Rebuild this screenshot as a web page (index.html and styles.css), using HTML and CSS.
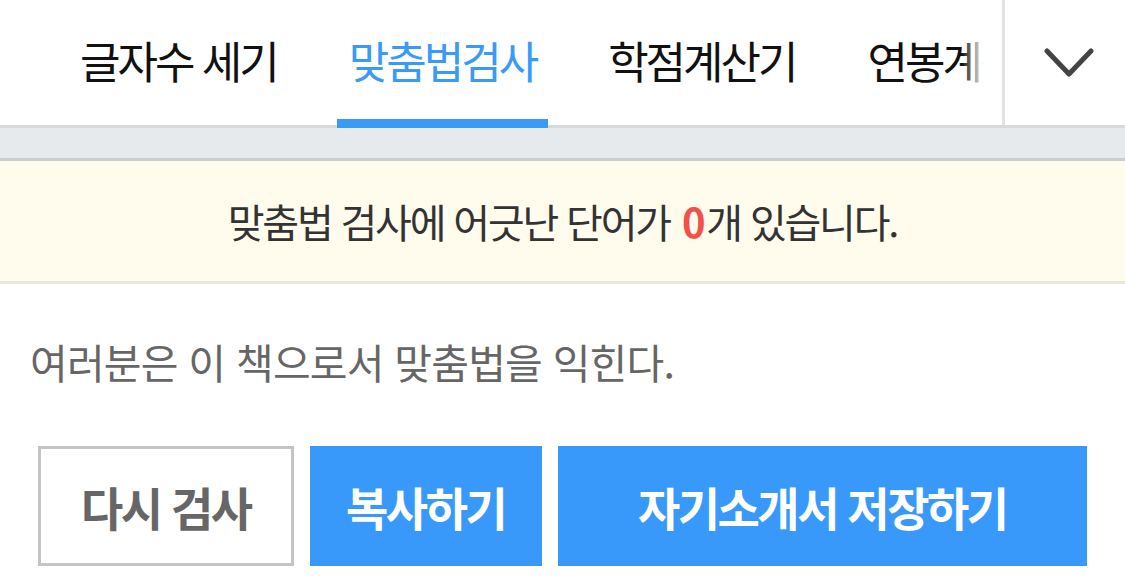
FILE: index.html
```html
<!DOCTYPE html>
<html lang="ko">
<head>
  <meta charset="UTF-8">
  <meta name="viewport" content="width=device-width, initial-scale=1.0">
  <title>맞춤법검사</title>
  <link rel="stylesheet" href="styles.css">
</head>
<body>

  <!-- Top Tabs -->
  <div id="top-nav">
    <div class="tab-list">
      <a class="tab" href="#">글자수 세기</a>
      <a class="tab active" href="#">맞춤법검사</a>
      <a class="tab" href="#">학점계산기</a>
      <a class="tab" href="#">연봉계산기</a>
    </div>
    <button class="more-btn" aria-label="더보기">
      <svg width="50" height="30" viewBox="0 0 50 30">
        <polyline points="3,3 25,26 47,3" fill="none" stroke="#444" stroke-width="5" stroke-linecap="round" stroke-linejoin="round"/>
      </svg>
    </button>
  </div>

  <div class="gap-band"></div>

  <!-- Result -->
  <div class="notice">
    맞춤법 검사에 어긋난 단어가 <strong class="count">0</strong>개 있습니다.
  </div>

  <div class="result-text">여러분은 이 책으로서 맞춤법을 익힌다.</div>

  <div class="actions">
    <button class="btn btn-outline">다시 검사</button>
    <button class="btn btn-blue btn-copy">복사하기</button>
    <button class="btn btn-blue btn-save">자기소개서 저장하기</button>
  </div>

</body>
</html>
```

FILE: styles.css
```css
/* Overall Styling */
body {
  font-family: "Noto Sans CJK KR", "Noto Sans", sans-serif;
  background-color: #fff;
  margin: 0;
  padding: 0;
}

/* Top Tabs */
#top-nav {
  display: flex;
  height: 128px;
  box-shadow: inset 0 -3px 0 #d9d9d9;
}

.tab-list {
  position: relative;
  flex: 1;
  display: flex;
  gap: 48px;
  padding-left: 68px;
  overflow: hidden;
  white-space: nowrap;
}

/* fade out the last tab under the edge */
.tab-list::after {
  content: "";
  position: absolute;
  top: 0;
  right: 0;
  width: 40px;
  height: 125px;
  background: linear-gradient(to right, rgba(255, 255, 255, 0), #fff 55%);
}

.tab {
  display: flex;
  align-items: center;
  padding: 0 12px;
  height: 119px;
  border-bottom: 9px solid transparent;
  font-size: 44px;
  letter-spacing: -3px;
  color: #111;
  text-decoration: none;
}

.tab.active {
  color: #3a9af8;
  border-bottom-color: #3a9af8;
}

.more-btn {
  width: 123px;
  height: 125px;
  border: none;
  border-left: 3px solid #e2e2e2;
  background-color: #fff;
  display: flex;
  align-items: center;
  justify-content: center;
  padding: 0 0 0 8px;
  cursor: pointer;
}

.gap-band {
  height: 30px;
  background-color: #e7eaed;
  border-bottom: 3px solid #cdcdcd;
}

/* Result */
.notice {
  height: 120px;
  background-color: #fffcee;
  border-bottom: 3px solid #e9e7d5;
  display: flex;
  align-items: center;
  justify-content: center;
  font-size: 40px;
  letter-spacing: -2.2px;
  color: #333;
}

.count {
  color: #f2514a;
  margin: 0 3px 0 12px;
}

.result-text {
  padding: 52px 30px 0;
  line-height: 50px;
  font-size: 41px;
  letter-spacing: -0.8px;
  color: #666;
}

.actions {
  display: flex;
  gap: 16px;
  padding: 60px 38px 0;
}

.btn {
  height: 120px;
  font-family: inherit;
  font-size: 46px;
  font-weight: bold;
  letter-spacing: -2.5px;
  border: none;
  cursor: pointer;
}

.btn-outline {
  width: 256px;
  background-color: #fff;
  border: 3px solid #c4c4c4;
  color: #666;
}

.btn-blue {
  background-color: #3899fa;
  color: #fff;
}

.btn-copy {
  width: 232px;
}

.btn-save {
  width: 530px;
}
```
